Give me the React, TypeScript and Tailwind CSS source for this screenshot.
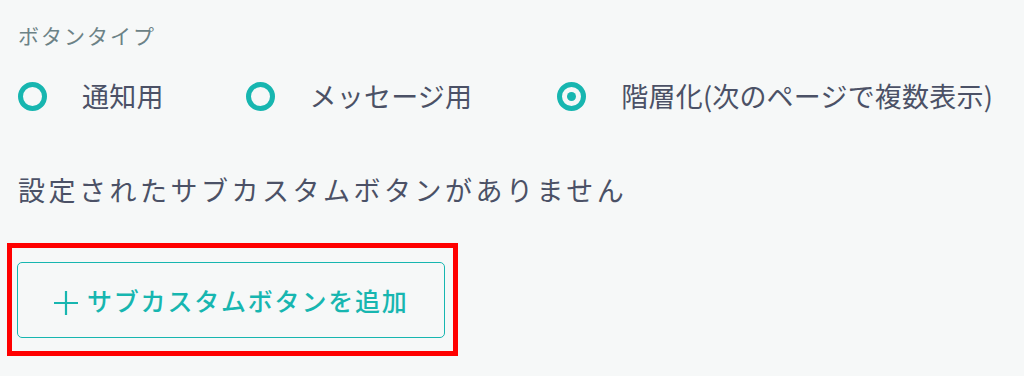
import React from "react";

const options = [
  { label: "通知用", checked: false },
  { label: "メッセージ用", checked: false },
  { label: "階層化(次のページで複数表示)", checked: true },
];

function Radio({ checked }: { checked: boolean }) {
  return (
    <span className="flex h-[29px] w-[29px] shrink-0 items-center justify-center rounded-full border-[5px] border-[#17b6b0]">
      {checked && <span className="h-[9px] w-[9px] rounded-full bg-[#17b6b0]" />}
    </span>
  );
}

export default function App() {
  return (
    <div
      className="h-[376px] w-[1024px] overflow-hidden bg-[#f6f8f8] px-[18px] pt-[20px]"
      style={{ fontFamily: '"Noto Sans CJK JP", "Noto Sans", sans-serif' }}
    >
      <p className="text-[21px] leading-[30px] tracking-[2px] text-[#6c8286]">ボタンタイプ</p>

      <div className="mt-[26px] flex h-[40px] items-center">
        {options.map((opt, i) => (
          <label
            key={opt.label}
            className={
              i === 0
                ? "flex items-center gap-[35px]"
                : i === 1
                  ? "ml-[82px] flex items-center gap-[35px]"
                  : "ml-[85px] flex items-center gap-[35px]"
            }
          >
            <Radio checked={opt.checked} />
            <span className="text-[27px] leading-[40px] tracking-[0.2px] text-[#4b5166]">{opt.label}</span>
          </label>
        ))}
      </div>

      <p className="mt-[56px] text-[27px] leading-[36px] tracking-[3.5px] text-[#4b5166]">
        設定されたサブカスタムボタンがありません
      </p>

      {/* highlight frame */}
      <div className="ml-[-11px] mt-[35px] w-fit border-[5px] border-[#ff0000] pb-[13px] pl-[5px] pr-[8px] pt-[14px]">
        <button className="flex h-[76px] w-[428px] items-center rounded-[5px] border-[1.5px] border-[#17b6b0] pl-[35px] text-[#17b6b0]">
          <svg width="26" height="26" viewBox="0 0 26 26" className="mr-[8px] mt-[6px]">
            <path d="M13 1v24M1 13h24" stroke="currentColor" strokeWidth="2.2" />
          </svg>
          <span className="text-[25px] font-medium leading-[36px] tracking-[1.8px]">サブカスタムボタンを追加</span>
        </button>
      </div>
    </div>
  );
}
